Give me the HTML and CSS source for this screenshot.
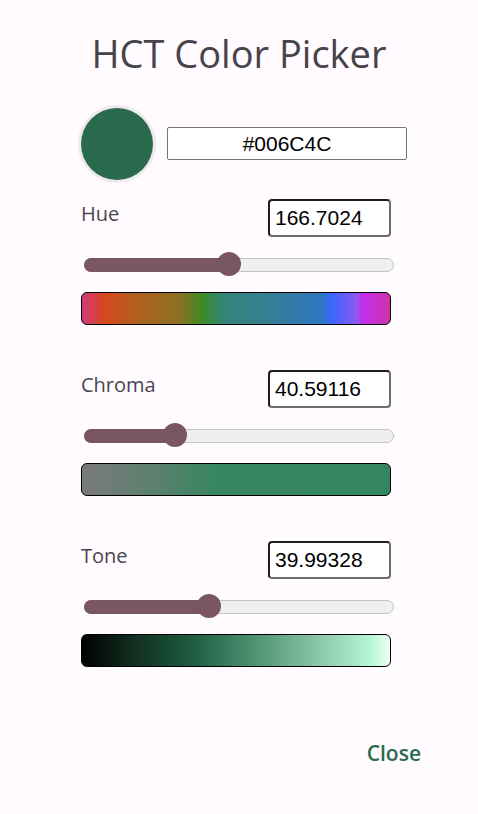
FILE: index.html
```html
<!DOCTYPE html>
<html>
<head>
<meta charset="utf-8">
<link rel="stylesheet" href="styles.css">
</head>
<body>
<div class="dialog">
  <h1 class="title">HCT Color Picker</h1>
  <div class="top-row">
    <div class="swatch"></div>
    <div class="hex-input">#006C4C</div>
  </div>

  <div class="section">
    <div class="label-row">
      <span class="label">Hue</span>
      <div class="num-input">166.7024</div>
    </div>
    <div class="slider">
      <div class="track"></div>
      <div class="fill" style="width: 46.8%"></div>
      <div class="thumb" style="left: 46.8%"></div>
    </div>
    <div class="bar bar-hue"></div>
  </div>

  <div class="section">
    <div class="label-row">
      <span class="label">Chroma</span>
      <div class="num-input">40.59116</div>
    </div>
    <div class="slider">
      <div class="track"></div>
      <div class="fill" style="width: 29.4%"></div>
      <div class="thumb" style="left: 29.4%"></div>
    </div>
    <div class="bar bar-chroma"></div>
  </div>

  <div class="section">
    <div class="label-row">
      <span class="label">Tone</span>
      <div class="num-input">39.99328</div>
    </div>
    <div class="slider">
      <div class="track"></div>
      <div class="fill" style="width: 40.3%"></div>
      <div class="thumb" style="left: 40.3%"></div>
    </div>
    <div class="bar bar-tone"></div>
  </div>

  <div class="footer">
    <span class="close">Close</span>
  </div>
</div>
</body>
</html>
```

FILE: styles.css
```css
html, body {
  margin: 0;
  padding: 0;
  background: #fffbfe;
}
.dialog {
  width: 478px;
  height: 814px;
  box-sizing: border-box;
  padding: 0 0 0 81px;
  font-family: "Open Sans", "Liberation Sans", sans-serif;
}
.title {
  margin: 0 0 0 -81px;
  padding-top: 28px;
  height: 76px;
  box-sizing: border-box;
  text-align: center;
  font-weight: 400;
  font-size: 38px;
  line-height: 50px;
  color: #46434a;
}
.top-row {
  display: flex;
  align-items: center;
  height: 79px;
  margin-top: 28px;
  margin-left: -3px;
}
.swatch {
  width: 72px;
  height: 72px;
  border-radius: 50%;
  background: #2a6a4f;
  box-shadow: 0 0 0 3px #eeeaec;
  margin-left: 3px;
}
.hex-input {
  margin-left: 14px;
  width: 238px;
  height: 31px;
  border: 1px solid #767676;
  border-radius: 2px;
  background: #fff;
  font-family: "Liberation Sans", Arial, sans-serif;
  font-size: 21px;
  line-height: 31px;
  text-align: center;
  color: #000;
}
.section {
  width: 310px;
  margin-top: 16px;
}
.section + .section {
  margin-top: 45px;
}
.label-row {
  display: flex;
  justify-content: space-between;
  align-items: flex-start;
  height: 38px;
}
.label {
  font-size: 20px;
  line-height: 30px;
  color: #49454f;
}
.num-input {
  height: 34px;
  border: 2px solid;
  border-color: #1e1e1e #6e6e6e #6e6e6e #1e1e1e;
  border-radius: 4px;
  background: #fff;
  box-sizing: content-box;
  margin-right: 0;
  padding: 0 0 0 5px;
  width: 114px;
  font-family: "Liberation Sans", Arial, sans-serif;
  font-size: 21px;
  line-height: 34px;
  color: #000;
}
.slider {
  position: relative;
  height: 24px;
  margin: 16px 0 0 3px;
  width: 310px;
}
.track {
  position: absolute;
  left: 0;
  right: 0;
  top: 5px;
  height: 12px;
  border: 1px solid #c4c4c4;
  border-radius: 7px;
  background: #efefef;
}
.fill {
  position: absolute;
  left: 0;
  top: 5px;
  height: 14px;
  border-radius: 7px;
  background: #7a5563;
}
.thumb {
  position: absolute;
  top: -1px;
  width: 24px;
  height: 24px;
  margin-left: -12px;
  border-radius: 50%;
  background: #7a5563;
}
.bar {
  margin-top: 15px;
  height: 31px;
  border: 1px solid #000;
  border-radius: 6px;
}
.bar-hue {
  background: linear-gradient(to right,
    #d23a7e 0%, #d7461e 7%, #b0611f 18%, #8a7222 32%, #3b8c22 39%,
    #348479 46%, #357f94 60%, #2f76c0 78%, #3a66ff 81%, #8a5af0 89%,
    #c22fed 91%, #cf33a8 100%);
}
.bar-chroma {
  background: linear-gradient(to right, #7a7a7a 0%, #5e8070 22%, #368660 45%, #338660 100%);
}
.bar-tone {
  background: linear-gradient(to right, #000 0%, #0f2a1c 15%, #1d5a40 35%, #4a9070 55%, #86c2a4 75%, #b6f7d4 94%, #f2fff8 100%);
}
.footer {
  display: flex;
  justify-content: flex-end;
  padding-right: 57px;
  margin-top: 71px;
}
.close {
  font-size: 21px;
  font-weight: 600;
  color: #2a6a4f;
  line-height: 30px;
}
```
